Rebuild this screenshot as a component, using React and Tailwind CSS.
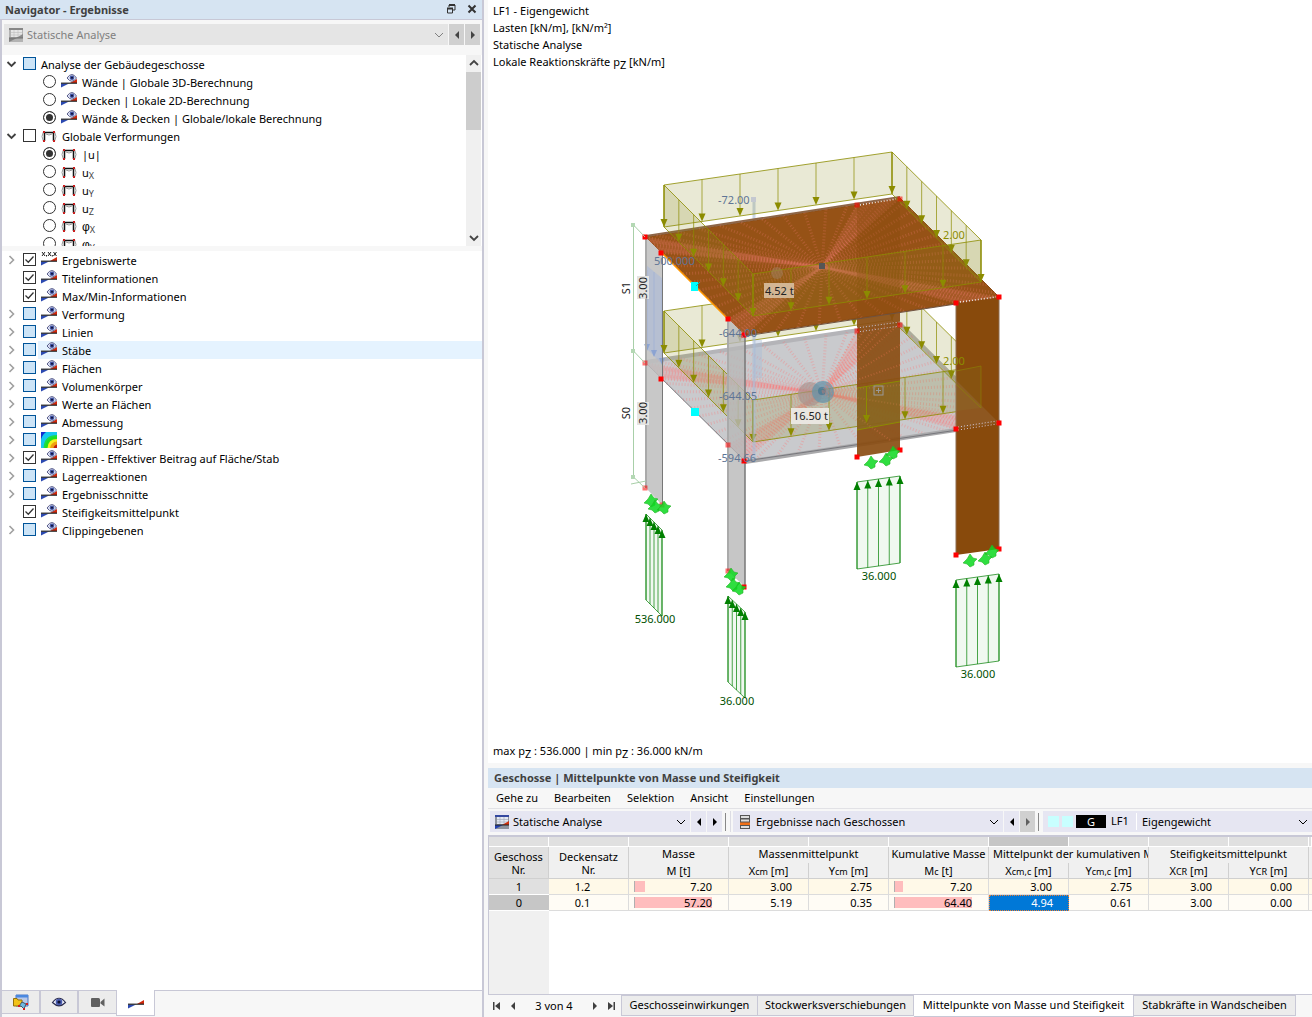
import { Fragment } from "react";

const topTree = [
  { label: "Analyse der Gebäudegeschosse", group: true, partial: true },
  { label: "Wände | Globale 3D-Berechnung", icon: "result", name: "storey" },
  { label: "Decken | Lokale 2D-Berechnung", icon: "result", name: "storey" },
  { label: "Wände & Decken | Globale/lokale Berechnung", icon: "result", name: "storey", checked: true },
  { label: "Globale Verformungen", group: true, icon: "frame" },
  { label: "|u|", icon: "frame", name: "deform", checked: true },
  { label: "u", sub: "X", icon: "frame", name: "deform" },
  { label: "u", sub: "Y", icon: "frame", name: "deform" },
  { label: "u", sub: "Z", icon: "frame", name: "deform" },
  { label: "φ", sub: "X", icon: "frame", name: "deform" },
  { label: "φ", sub: "Y", icon: "frame", name: "deform" },
];

const options = [
  { label: "Ergebniswerte", icon: "values", open: true, checked: true },
  { label: "Titelinformationen", checked: true },
  { label: "Max/Min-Informationen", checked: true },
  { label: "Verformung", open: true },
  { label: "Linien", open: true },
  { label: "Stäbe", open: true, active: true },
  { label: "Flächen", open: true },
  { label: "Volumenkörper", open: true },
  { label: "Werte an Flächen", open: true },
  { label: "Abmessung", open: true },
  { label: "Darstellungsart", icon: "contour", open: true },
  { label: "Rippen - Effektiver Beitrag auf Fläche/Stab", open: true, checked: true },
  { label: "Lagerreaktionen", open: true },
  { label: "Ergebnisschnitte", open: true },
  { label: "Steifigkeitsmittelpunkt", checked: true },
  { label: "Clippingebenen", open: true },
];

const rows = [
  { nr: "1", set: "1.2", mass: "7.20", massBar: 11, cum: "7.20", cumBar: 9, cells: ["3.00", "2.75", "3.00", "2.75", "3.00", "0.00"] },
  { nr: "0", set: "0.1", mass: "57.20", massBar: 78, cum: "64.40", cumBar: 78, cells: ["5.19", "0.35", "4.94", "0.61", "3.00", "0.00"] },
];

const menus = ["Gehe zu", "Bearbeiten", "Selektion", "Ansicht", "Einstellungen"];

function Eye() {
  return (
    <>
      <path d="M6 4Q11 -3 15.500 4Q11 10.500 6 4Z" fill="#dfe3f4" stroke="#4a4e80" strokeWidth=".9" />
      <circle cx="11" cy="3.800" r="2.300" fill="#4456a8" />
      <circle cx="11" cy="3.800" r="1" fill="#0d1030" />
    </>
  );
}

function ResultBars() {
  return (
    <>
      <path d="M0 13.500V9.500H8Z" fill="#2b49b0" />
      <path d="M16 5V9H9Z" fill="#d0280c" />
      <path d="M0 9.200H16" stroke="#222" strokeWidth="1.200" />
    </>
  );
}

function TreeIcon({ type }) {
  if (type === "frame") {
    return (
      <svg className="h-4 w-4 shrink-0" viewBox="0 0 16 16" fill="none">
        <path d="M2.500 3.500Q-0.500 8.500 2.500 13.500M13.500 3.500Q16.500 8.500 13.500 13.500" stroke="#999" />
        <path d="M3.500 13V4.500H12.500V13" stroke="#111" strokeWidth="1.500" />
        <path d="M5 6Q8 8 11 6" stroke="#999" />
        <path d="M2 3h2v2H2zM12 3h2v2h-2zM2 12h2v2H2zM12 12h2v2h-2z" fill="#c81e1e" />
      </svg>
    );
  }
  if (type === "contour") {
    return (
      <svg className="h-4 w-4 shrink-0" viewBox="0 0 16 16">
        <path d="M0 0H16V16H0Z" fill="#1030d0" />
        <path d="M16 0H5Q0 4 0 9V16H16Z" fill="#16c8f0" />
        <path d="M16 3Q3 3 2.500 16H16Z" fill="#18dc50" />
        <path d="M16 4.500Q5 4.500 4 16H16Z" fill="#20e020" />
        <path d="M16 7Q7 7 6.500 16H16Z" fill="#f4f020" />
        <path d="M16 9.500Q10 10 9 16H16Z" fill="#f0a010" />
        <path d="M16 12.500Q13 13 12.500 16H16Z" fill="#c02010" />
      </svg>
    );
  }
  if (type === "values") {
    return (
      <svg className="h-4 w-4 shrink-0" viewBox="0 0 16 16">
        <path d="M1 0l3 4M4 0l-3 4M7 0l3 4M10 0l-3 4M12.500 0l3 4M15.500 0l-3 4M5.500 3v1.500M11.300 3v1.500" stroke="#222" />
        <ResultBars />
      </svg>
    );
  }
  return (
    <svg className="h-4 w-4 shrink-0" viewBox="0 0 16 16">
      <ResultBars />
      <Eye />
    </svg>
  );
}

function Chevron({ className, d = "M2 4L6 8L10 4", width = 1 }) {
  return (
    <svg className={className} viewBox="0 0 12 12" fill="none" stroke="currentColor" strokeWidth={width}>
      <path d={d} />
    </svg>
  );
}

function CheckBox({ id, checked, partial }) {
  return (
    <span className="mt-px grid h-[13px] w-[13px] shrink-0">
      <input
        id={id}
        type="checkbox"
        defaultChecked={checked}
        className={
          partial
            ? "peer col-start-1 row-start-1 h-[13px] w-[13px] appearance-none border border-[#005499] bg-[#cce4f7]"
            : "peer col-start-1 row-start-1 h-[13px] w-[13px] appearance-none border border-[#333] bg-white"
        }
      />
      <svg className="pointer-events-none col-start-1 row-start-1 hidden h-[13px] w-[13px] peer-checked:block" viewBox="0 0 13 13" fill="none">
        <path d="M2.500 6.500L5.300 9.200L10.500 3.500" stroke="#333" strokeWidth="1.3" />
      </svg>
    </span>
  );
}

function TopRow({ item, index }) {
  const id = `top-${index}`;
  if (item.group) {
    return (
      <li className="flex h-[18px] items-start gap-[5px] pl-[3px]">
        <Chevron className="mt-0.5 h-3 w-[13px] shrink-0 text-[#404040]" width={1.8} />
        <CheckBox id={id} partial={item.partial} />
        {item.icon && <TreeIcon type={item.icon} />}
        <label htmlFor={id}>{item.label}</label>
      </li>
    );
  }
  return (
    <li className="flex h-[18px] items-start gap-[5px] pl-[41px]">
      <input
        id={id}
        type="radio"
        name={item.name}
        defaultChecked={item.checked}
        className="mt-px h-[13px] w-[13px] shrink-0 appearance-none rounded-full border border-[#333] bg-white checked:bg-[#333] checked:shadow-[inset_0_0_0_2px_white]"
      />
      <TreeIcon type={item.icon} />
      <label htmlFor={id} className={item.label === "φ" ? "font-['Liberation_Sans',sans-serif] text-[12px]" : ""}>
        {item.label}
        {item.sub && <sub className="font-['Noto_Sans',sans-serif] text-[9px] text-[#444]">{item.sub}</sub>}
      </label>
    </li>
  );
}

function OptionRow({ item, index }) {
  const id = `opt-${index}`;
  return (
    <li className="flex h-[18px] items-start gap-0.5 pl-[3px]">
      <span className="flex shrink-0 gap-[5px] pt-px">
        <span className="h-[13px] w-[13px]">
          {item.open && <Chevron className="mt-0.5 h-3 w-[13px] text-[#a0a0a0]" d="M4 2L8 6L4 10" width={1.6} />}
        </span>
        <CheckBox id={id} checked={item.checked} partial={!item.checked} />
      </span>
      <span className={item.active ? "flex h-[18px] flex-1 gap-[5px] bg-[#e5f3ff] pt-px pl-[3px]" : "flex h-[18px] flex-1 gap-[5px] pt-px pl-[3px]"}>
        <TreeIcon type={item.icon} />
        <label htmlFor={id} className="leading-[18px]">{item.label}</label>
      </span>
    </li>
  );
}

function AnalysisIcon({ muted }) {
  return (
    <svg className={muted ? "h-4 w-4 shrink-0 opacity-60 grayscale" : "h-4 w-4 shrink-0"} viewBox="0 0 16 16">
      <path d="M1 1H15V15H1Z" fill="#8d929c" />
      <path d="M1 1H15V3H1Z" fill="#3448a0" />
      <path d="M3 3H14V10H3Z" fill="#e4e8f2" />
      <path d="M3 5.500H14M3 8H14M6 3V10M10 3V10" stroke="#a6adbd" strokeWidth=".7" />
      <path d="M1 15V11H9Z" fill="#2440b0" />
      <path d="M15 7V11H8Z" fill="#d0300c" />
      <path d="M1 11H15" stroke="#222" />
    </svg>
  );
}

function ArrowButton({ dir, label, className = "" }) {
  return (
    <button type="button" aria-label={label} className={`flex h-[21px] w-[15px] shrink-0 items-center justify-center ${className}`}>
      <svg className="h-2 w-2" viewBox="0 0 8 8" fill="currentColor">
        <path d={dir === "left" ? "M6 0V8L2 4Z" : "M2 0V8L6 4Z"} />
      </svg>
    </button>
  );
}

function Combo({ icon, value, label, className }) {
  return (
    <div className={`flex h-[21px] items-center gap-[3px] ${className}`}>
      {icon}
      <select aria-label={label} className="h-[21px] min-w-0 flex-1 appearance-none bg-transparent leading-[21px]">
        <option>{value}</option>
      </select>
      <Chevron className="pointer-events-none mr-[3px] h-3 w-3 shrink-0" />
    </div>
  );
}

function Navigator() {
  return (
    <aside className="flex w-[484px] shrink-0 flex-col border-r-2 border-[#c8c8d6] bg-[#f7f7f7]">
      <header className="flex h-[19px] shrink-0 items-center justify-between bg-[#d6e4f2] pl-[5px] pr-1">
        <h1 className="leading-[18px] font-bold text-[#404040]">Navigator - Ergebnisse</h1>
        <div className="flex gap-[9px] pb-px">
          <button type="button" aria-label="Abdocken">
            <svg className="h-3 w-3" viewBox="0 0 12 12" fill="none" stroke="#333">
              <path d="M4 4V2H10V7H8" />
              <path d="M4 2H10M2 5.500H8" strokeWidth="2" />
              <path d="M2.500 5.500H7.500V10H2.500Z" />
            </svg>
          </button>
          <button type="button" aria-label="Schließen">
            <svg className="h-3 w-3" viewBox="0 0 12 12" stroke="#333" strokeWidth="2">
              <path d="M2.500 2.500L9.500 9.500M9.500 2.500L2.500 9.500" />
            </svg>
          </button>
        </div>
      </header>
      <div className="flex min-h-0 flex-1 flex-col border-l-2 border-t border-[#c8c8d6]">
        <div className="mt-1 flex gap-px pl-0.5 text-[#808080]">
          <Combo label="Analyse" value="Statische Analyse" icon={<AnalysisIcon muted />} className="flex-1 bg-[#e5e5e5] pl-1" />
          <ArrowButton dir="left" label="Vorherige Analyse" className="bg-[#d0d0d0] text-[#444]" />
          <ArrowButton dir="right" label="Nächste Analyse" className="mr-0.5 bg-[#d0d0d0] text-[#444]" />
        </div>
        <div className="mt-2.5 flex h-[191px] shrink-0 bg-white">
          <ul className="flex-1 overflow-hidden pt-px leading-[18px]">
            {topTree.map((item, i) => (
              <TopRow key={i} item={item} index={i} />
            ))}
          </ul>
          <div className="mr-px flex w-[15px] flex-col items-center bg-[#f0f0f0]">
            <Chevron className="my-0.5 h-3 w-3 text-[#444]" d="M2 8L6 4L10 8" width={1.8} />
            <div className="mt-px h-[58px] w-full bg-[#cdcdcd]" />
            <Chevron className="mt-auto mb-0.5 h-3 w-3 text-[#444]" width={1.8} />
          </div>
        </div>
        <ul className="mt-[5px] min-h-0 flex-1 overflow-hidden bg-white">
          {options.map((item, i) => (
            <OptionRow key={i} item={item} index={i} />
          ))}
        </ul>
        <div className="flex h-[27px] shrink-0">
          <button type="button" aria-label="Daten" className="flex h-6 w-[39px] items-center justify-center border-y border-r-2 border-[#c8c8d6] bg-[#ececec]">
            <svg className="h-4 w-4" viewBox="0 0 16 16">
              <path d="M3 1H15V12H3Z" fill="#b8c8e8" stroke="#4a78c8" />
              <path d="M3 1H15V3.500H3Z" fill="#4a88e0" />
              <path d="M0.500 4.500H4L5 6H9V12H0.500Z" fill="#f2c218" stroke="#94700c" />
              <path d="M6 12L9 8L13 10L11 15L8 12Z" fill="#70b8e0" stroke="#456" />
              <path d="M5 11h2v2H5zM10 14h2v2h-2zM13 9h2v2h-2z" fill="#d02020" />
            </svg>
          </button>
          <button type="button" aria-label="Anzeige" className="flex h-6 w-[38px] items-center justify-center border-y border-r-2 border-[#c8c8d6] bg-[#ececec]">
            <svg className="h-4 w-4" viewBox="0 0 16 16">
              <path d="M1.500 8.500Q8 0 14.500 8.500Q8 15 1.500 8.500Z" fill="#eef0fa" stroke="#2c2e50" strokeWidth="1.2" />
              <circle cx="8" cy="8" r="3.300" fill="#4a5cb0" />
              <circle cx="8" cy="8" r="1.600" fill="#0c1030" />
            </svg>
          </button>
          <button type="button" aria-label="Ansichten" className="flex h-6 w-[37px] items-center justify-center border-y border-[#c8c8d6] bg-[#ececec]">
            <svg className="h-4 w-4" viewBox="0 0 16 16" fill="#606060">
              <path d="M1 5Q1 4 2 4H8.500Q10 4 10 5.500V12Q10 13 9 13H2Q1 13 1 12ZM10.500 8L14.500 4.500V12.500L10.500 9.500Z" />
            </svg>
          </button>
          <button type="button" aria-label="Ergebnisse" className="flex h-[26px] w-[39px] items-center justify-center border-x border-b border-[#c8c8d6] bg-white">
            <svg className="h-4 w-4" viewBox="0 0 16 16">
              <ResultBars />
            </svg>
          </button>
          <div className="flex-1 border-t border-[#c8c8d6]" />
        </div>
      </div>
    </aside>
  );
}

const lerp = (a, b, t) => [a[0] + (b[0] - a[0]) * t, a[1] + (b[1] - a[1]) * t];
const pts = (list) => list.map((p) => p.join(",")).join(" ");

// Distribution of the slab mass towards its centre
function Rays({ dy, color, opacity }) {
  const centre = [822, 267 + dy];
  const corners = [[646, 237 + dy], [900, 198 + dy], [999, 297 + dy], [745, 335 + dy]];
  const walls = [
    [[646, 237 + dy], [662, 253 + dy]],
    [[728, 319 + dy], [745, 335 + dy]],
    [[857, 205 + dy], [900, 198 + dy]],
    [[956, 303 + dy], [999, 297 + dy]],
  ];
  return (
    <g stroke={color} fill="none" opacity={opacity}>
      {corners.map((c, i) =>
        Array.from({ length: 12 }, (_, k) => {
          const [x, y] = lerp(c, corners[(i + 1) % 4], (k + 0.5) / 12);
          return <line key={`${i}-${k}`} x1={x} y1={y} x2={centre[0]} y2={centre[1]} strokeWidth="3" strokeDasharray="1 2" opacity=".38" />;
        })
      )}
      {walls.map(([a, b], i) => (
        <Fragment key={i}>
          <polygon points={pts([a, b, centre])} fill={color} stroke="none" opacity=".22" />
          {Array.from({ length: 7 }, (_, k) => {
            const [x, y] = lerp(a, b, k / 6);
            return <line key={k} x1={x} y1={y} x2={centre[0]} y2={centre[1]} strokeWidth="2" strokeDasharray="1 2" opacity=".45" />;
          })}
        </Fragment>
      ))}
    </g>
  );
}

function LoadBox({ dy }) {
  const top = [[664, 185 + dy], [892, 152 + dy], [981, 240 + dy], [753, 274 + dy]];
  const down = ([x, y]) => [x, y + 42];
  return (
    <g>
      {top.map((a, i) => {
        const b = top[(i + 1) % 4];
        return (
          <g key={i}>
            <polygon points={pts([a, b, down(b), down(a)])} fill="#8c8c1e" fillOpacity=".19" stroke="#8c8c00" strokeOpacity=".8" />
            {Array.from({ length: 6 }, (_, k) => {
              const [x, y] = lerp(a, b, k / 6);
              return (
                <g key={k}>
                  <path d={`M${x} ${y}V${y + 36}`} stroke="#8c8c00" strokeOpacity=".7" />
                  <path d={`M${x - 3.5} ${y + 34}h7l-3.5 8z`} fill="#8c8c00" />
                </g>
              );
            })}
          </g>
        );
      })}
    </g>
  );
}

function Reaction({ a, b, height, label, tx, ty }) {
  return (
    <g>
      <polygon points={pts([a, b, [b[0], b[1] + height], [a[0], a[1] + height]])} fill="#008000" fillOpacity=".06" stroke="#1f8c1f" strokeOpacity=".8" />
      {[0, 0.25, 0.5, 0.75, 1].map((t) => {
        const [x, y] = lerp(a, b, t);
        return (
          <g key={t}>
            <path d={`M${x} ${y}V${y + height}`} stroke="#008000" strokeOpacity=".7" />
            <path d={`M${x - 3.5} ${y + 8}h7l-3.5 -8z`} fill="#008000" />
          </g>
        );
      })}
      <text x={tx} y={ty} textAnchor="middle" fill="#005000">{label}</text>
    </g>
  );
}

function Support({ x, y }) {
  return <path d={`M${x} ${y - 6}l3 4 4 1-3 3 0 3-4 2-3-3-4-1 4-4z`} fill="#0ad81e" fillOpacity=".85" stroke="#28b428" strokeWidth=".6" />;
}

function Nodes({ list, opacity = 1 }) {
  return list.map(([x, y]) => <rect key={`${x}-${y}`} x={x - 2.5} y={y - 2.5} width="5" height="5" fill="#ff0000" opacity={opacity} />);
}

function Model() {
  return (
    <svg className="absolute inset-0 h-full w-full text-[11px]" viewBox="488 0 824 763" preserveAspectRatio="xMinYMin meet" fill="none" aria-label="Gebäudemodell">
      {/* storey 0 */}
      <polygon points="646,363 900,324 999,423 745,461" fill="#c9cacd" />
      <path d="M646 362L900 324L999 422" stroke="#b4b4b8" strokeWidth="4" />
      <Rays dy={126} color="#ff7070" opacity=".85" />
      <path d="M745 462L956 430" stroke="#a9a9ab" strokeWidth="4" />
      <path d="M646 363L745 461L999 424" stroke="#77777c" />
      <polygon points="646,237 662,253 662,505 646,488" fill="#bebebe" fillOpacity=".85" />
      <polygon points="646,265 663,279 663,365 646,348" fill="#a4b6dc" fillOpacity=".5" />
      <path d="M647 270V350M654 272V356M662 280V362" stroke="#8ba8da" strokeOpacity=".4" />
      <path d="M644 344h6l-3 7zM651 350h6l-3 7zM659 358h6l-3 7z" fill="#7c9ad2" opacity=".7" />
      <path d="M646 237V488" stroke="#aaa" strokeWidth="2" />
      <path d="M662.500 253V505" stroke="#777" />
      <LoadBox dy={126} />
      <circle cx="810" cy="394" r="12" fill="#a8928e" fillOpacity=".65" />
      <circle cx="823" cy="392" r="11" fill="#6594aa" fillOpacity=".75" />
      <circle cx="822" cy="391" r="4" fill="#3b7190" opacity=".6" />
      <path d="M754 202V460" stroke="#a8bcd8" strokeWidth="3" opacity=".6" />
      <path d="M758 340V378" stroke="#a8bcd8" strokeWidth="8" opacity=".4" />
      {/* back wall */}
      <polygon points="857,205 900,198 900,450 857,457" fill="#8a4d12" fillOpacity=".92" />
      <g opacity=".3" stroke="#ff8264" strokeDasharray="1 2">
        <path d="M857 331L822 392M865 329L822 392M875 328L822 392M885 326L822 392M898 325L822 392M900 345L822 392M900 365L822 392M900 385L822 392M900 405L822 392M890 440L822 392" strokeWidth="2" />
      </g>
      <polygon points="857,388 900,381 900,422 857,430" fill="#84842a" fillOpacity=".35" />
      <path d="M857 388L900 381M857 430L900 422" stroke="#8c8c00" />
      <path d="M866.500 387V418" stroke="#8c8c00" />
      <path d="M863 415h7l-3.500 8z" fill="#8c8c00" />
      <path d="M857 328L900 322M857 332L900 326" stroke="#c8c4d4" strokeDasharray="1 2" />
      <rect x="874" y="386" width="9" height="9" stroke="#999" />
      <path d="M878.500 388V393M876 390.500H881" stroke="#999" />
      {/* right wall */}
      <polygon points="956,303 999,297 999,549 956,555" fill="#884a0c" />
      <path d="M956 303V555M999 297V549" stroke="#8d6c50" />
      <polygon points="956,370 981,366 981,408 956,411" fill="#84842a" fillOpacity=".15" />
      <polygon points="956,380 999,423 956,429" fill="#9b7650" fillOpacity=".3" />
      <path d="M956 371L981 366V408M956 384L981 408" stroke="#8c8c00" opacity=".5" />
      <path d="M958 427L997 421M958 430L997 424" stroke="#d4cce0" strokeDasharray="1 2" />
      {/* storey 1 */}
      <polygon points="646,237 900,198 999,297 745,335" fill="#965216" stroke="#8a4a12" />
      <path d="M646 236L900 197" stroke="#8d6547" strokeWidth="2" />
      <Rays dy={0} color="#ff8282" opacity=".65" />
      <polygon points="857,205 900,198 900,311 857,318" fill="#8a4a0c" fillOpacity=".35" />
      <path d="M662 253L728 319" stroke="#ff9600" strokeWidth="1.500" />
      <path d="M745 336L956 304" stroke="#6f5240" />
      <path d="M860 205L896 199M960 302L996 297" stroke="#eee" strokeDasharray="1 2" strokeWidth="1.500" />
      {/* front wall */}
      <polygon points="728,319 745,335 745,587 728,571" fill="#b8b8b8" fillOpacity=".8" />
      <path d="M728 319V571" stroke="#aaa" strokeWidth="2" />
      <path d="M745 335V587" stroke="#777" strokeWidth="1.500" />
      <LoadBox dy={0} />
      <rect x="819" y="263" width="6" height="6" fill="#555" />
      <circle cx="777" cy="273" r="6" fill="#a08060" opacity=".5" />
      <rect x="751" y="197" width="5" height="5" fill="#c4c8d0" />
      <rect x="691" y="282" width="7" height="9" fill="#0ff" />
      <path d="M696 286L700 282" stroke="#0bb" />
      <rect x="691" y="408" width="8" height="8" fill="#0ff" />

      <Nodes list={[[645, 237], [661, 253], [744, 335], [999, 297], [956, 303], [661, 379], [744, 461], [956, 429], [999, 423], [857, 457], [900, 450], [956, 555], [999, 549], [744, 587], [728, 319]]} />
      <Nodes opacity={0.55} list={[[645, 363], [728, 445], [645, 488], [857, 205], [900, 199], [857, 331], [900, 325], [728, 571], [662, 505]]} />
      <Support x={651} y={500} />
      <Support x={655} y={506} />
      <Support x={664} y={507} />
      <Support x={731} y={574} />
      <Support x={733} y={584} />
      <Support x={739} y={588} />
      <Support x={871} y={462} />
      <Support x={886} y={459} />
      <Support x={893} y={452} />
      <Support x={970} y={560} />
      <Support x={985} y={558} />
      <Support x={992} y={551} />

      {/* storey heights */}
      <path d="M645 237L633.500 225V477L645 488M645 363L633.500 351M631 484L646 481" stroke="#a8cfa8" />
      <path d="M631 223h4v4h-4zM631 349h4v4h-4zM631 475h4v4h-4z" fill="#b4d8b4" />
      <rect x="637" y="276" width="12" height="23" fill="#e4e4e2" />
      <rect x="637" y="402" width="12" height="23" fill="#e4e4e2" />
      <g fill="#222" textAnchor="middle">
        <text transform="translate(630 288) rotate(-90)">S1</text>
        <text transform="translate(647 288) rotate(-90)">3.00</text>
        <text transform="translate(630 413) rotate(-90)">S0</text>
        <text transform="translate(647 413) rotate(-90)">3.00</text>
      </g>

      <Reaction a={[646, 514]} b={[662, 530]} height={86} label="536.000" tx={655} ty={623} />
      <Reaction a={[728, 596]} b={[745, 612]} height={86} label="36.000" tx={737} ty={705} />
      <Reaction a={[857, 482]} b={[900, 476]} height={87} label="36.000" tx={879} ty={580} />
      <Reaction a={[956, 580]} b={[999, 574]} height={87} label="36.000" tx={978} ty={678} />

      <g fill="#5f7595">
        <text x="718" y="204">-72.00</text>
        <text x="654" y="265">500.000</text>
        <text x="719" y="337">-644.00</text>
        <text x="719" y="400">-644.05</text>
        <text x="718" y="462">-594.66</text>
      </g>
      <g fill="#8c8c00">
        <text x="943" y="239">2.00</text>
        <text x="943" y="365">2.00</text>
      </g>
      <rect x="764" y="283" width="30" height="15" fill="#d3b694" />
      <text x="765" y="295" fill="#222">4.52 t</text>
      <rect x="791" y="408" width="38" height="16" fill="#e9e6e0" />
      <text x="793" y="420" fill="#222">16.50 t</text>
    </svg>
  );
}

function Viewport() {
  return (
    <section className="relative flex min-h-0 flex-1 flex-col justify-between bg-white px-[5px] pt-0.5 pb-1">
      <Model />
      <div className="leading-[17px]">
        <p>LF1 - Eigengewicht</p>
        <p>Lasten [kN/m], [kN/m²]</p>
        <p>Statische Analyse</p>
        <p className="h-[17px]">
          Lokale Reaktionskräfte p<sub className="text-[11px]">Z</sub> [kN/m]
        </p>
      </div>
      <p className="leading-[17px]">
        max p<sub className="text-[11px]">Z</sub> : 536.000 | min p<sub className="text-[11px]">Z</sub> : 36.000 kN/m
      </p>
    </section>
  );
}

function BarCell({ value, width }) {
  return (
    <td className="border-r border-b border-[#dcdcdc] p-0">
      <div className="grid h-[15px] items-center pl-[5px]">
        <span className="col-start-1 row-start-1 h-[11px] border-l border-[#b0b0b0] bg-[#ffbdbd]" style={{ width }} />
        <span className="col-start-1 row-start-1 pr-4 text-right">{value}</span>
      </div>
    </td>
  );
}

function Unit({ name, sub, unit }) {
  return (
    <th scope="col" className="h-4 border-r border-b border-[#d0d0d0] align-top leading-[15px] font-normal">
      {name}
      {sub && <sub className="bottom-0 text-[9px]">{sub}</sub>} [{unit}]
    </th>
  );
}

function StoreyTable() {
  return (
    <table className="w-full table-fixed border-separate border-spacing-0 text-center leading-[15px] [&_td]:p-0 [&_th]:p-0">
      <colgroup>
        <col className="w-[60px]" />
        <col className="w-[80px]" />
        <col className="w-[100px]" />
        <col className="w-[80px]" />
        <col className="w-[80px]" />
        <col className="w-[100px]" />
        <col className="w-[80px]" />
        <col className="w-[80px]" />
        <col className="w-[80px]" />
        <col className="w-[80px]" />
        <col />
      </colgroup>
      <thead className="bg-[#f0f0f0]">
        <tr>
          {Array.from({ length: 11 }, (_, i) => (
            <td key={i} className={i === 6 ? "h-2.5 border-r border-b border-white bg-[#c6c6c6]" : "h-2.5 border-r border-b border-white bg-[#e0e0e0]"} />
          ))}
        </tr>
        <tr className="leading-[14px]">
          <th scope="col" rowSpan="2" className="border-r border-b border-[#d0d0d0] bg-[#e0e0e0] leading-[13px] font-normal">Geschoss<br />Nr.</th>
          <th scope="col" rowSpan="2" className="border-r border-b border-[#d0d0d0] leading-[13px] font-normal">Deckensatz<br />Nr.</th>
          <th scope="col" className="h-4 border-r border-[#d0d0d0] align-top font-normal">Masse</th>
          <th scope="colgroup" colSpan="2" className="border-r border-[#d0d0d0] align-top font-normal">Massenmittelpunkt</th>
          <th scope="col" className="border-r border-[#d0d0d0] align-top font-normal whitespace-nowrap">Kumulative Masse</th>
          <th scope="colgroup" colSpan="2" className="overflow-hidden border-r border-[#d0d0d0] text-left align-top font-normal whitespace-nowrap"><span className="pl-1">Mittelpunkt der kumulativen Masse</span></th>
          <th scope="colgroup" colSpan="2" className="border-r border-[#d0d0d0] align-top font-normal">Steifigkeitsmittelpunkt</th>
          <td rowSpan="2" className="border-b border-[#d0d0d0]" />
        </tr>
        <tr>
          <Unit name="M" unit="t" />
          <Unit name="X" sub="cm" unit="m" />
          <Unit name="Y" sub="cm" unit="m" />
          <Unit name="M" sub="c" unit="t" />
          <Unit name="X" sub="cm,c" unit="m" />
          <Unit name="Y" sub="cm,c" unit="m" />
          <Unit name="X" sub="CR" unit="m" />
          <Unit name="Y" sub="CR" unit="m" />
        </tr>
      </thead>
      <tbody>
        {rows.map((row, i) => {
          const cell = (k) => (
            <td
              key={k}
              className={
                i === 1 && k === 2
                  ? "border border-dotted border-[#f08030] bg-[#0078d7] text-right text-white"
                  : "border-r border-b border-[#dcdcdc] text-right"
              }
            >
              <span className={i === 1 && k === 2 ? "block h-3.5 pr-[15px] leading-[14px]" : "block h-[15px] pr-4"}>{row.cells[k]}</span>
            </td>
          );
          return (
            <tr key={row.nr} className={i === 0 ? "h-4 bg-[#fff9e8]" : "h-4 bg-[#fffcf5]"}>
              <th scope="row" className={i === 0 ? "border-b border-white bg-[#e0e0e0] font-normal" : "border-b border-white bg-[#c6c6c6] font-normal"}>{row.nr}</th>
              <td className="border-r border-b border-[#dcdcdc]"><span className="pr-3">{row.set}</span></td>
              <BarCell value={row.mass} width={row.massBar} />
              {[0, 1].map(cell)}
              <BarCell value={row.cum} width={row.cumBar} />
              {[2, 3, 4, 5].map(cell)}
              <td className="border-b border-[#dcdcdc]" />
            </tr>
          );
        })}
      </tbody>
    </table>
  );
}

function PageButton({ label, d }) {
  return (
    <button type="button" aria-label={label} className="text-[#404040]">
      <svg className="h-2 w-[9px]" viewBox="0 0 9 8" fill="currentColor">
        <path d={d} />
      </svg>
    </button>
  );
}

function ResultsPanel() {
  return (
    <section className="mt-[5px] flex h-[249px] shrink-0 flex-col bg-[#f7f7f7]">
      <h2 className="h-5 shrink-0 bg-[#d6e4f2] pl-1.5 leading-5 font-bold text-[#404040]">Geschosse | Mittelpunkte von Masse und Steifigkeit</h2>
      <nav className="flex h-[21px] shrink-0 items-center gap-4 border-b border-[#e2e2e6] pt-px pl-2">
        {menus.map((m) => (
          <button key={m} type="button">{m}</button>
        ))}
      </nav>
      <div className="flex shrink-0 items-center gap-px pt-0.5 pb-[3px] pl-0.5">
        <Combo label="Analyse" value="Statische Analyse" icon={<AnalysisIcon />} className="w-[200px] bg-[#e6e6f2] pl-1" />
        <ArrowButton dir="left" label="Zurück" className="bg-[#e6e6f2]" />
        <ArrowButton dir="right" label="Weiter" className="bg-[#e6e6f2]" />
        <span className="mx-0.5 h-[18px] w-px bg-[#888]" />
        <span className="mx-px h-[21px] w-px bg-[#dcdce4]" />
        <Combo
          label="Tabelle"
          value="Ergebnisse nach Geschossen"
          className="w-[270px] bg-[#e6e6f2] pl-1"
          icon={
            <svg className="h-4 w-4 shrink-0" viewBox="0 0 16 16">
              <path d="M3 1H13V15H3Z" fill="#555" />
              <path d="M4 2H12V4H4ZM4 5.500H12V7.500H4ZM4 12H12V14H4Z" fill="#ddd" />
              <path d="M3 8.500H13V11H3Z" fill="#f07018" />
            </svg>
          }
        />
        <ArrowButton dir="left" label="Vorherige Tabelle" className="bg-[#e6e6f2]" />
        <ArrowButton dir="right" label="Nächste Tabelle" className="bg-[#d0d0d0] text-[#606060]" />
        <span className="ml-0.5 h-[18px] w-px bg-[#888]" />
        <Combo
          label="Lastfall"
          value="Eigengewicht"
          className="ml-[3px] min-w-0 flex-1 bg-[#e6e6f2] pl-[5px]"
          icon={
            <span className="flex items-center">
              <span className="h-[11px] w-[11px] bg-[#c8ffff]" />
              <span className="ml-[3px] h-[11px] w-[11px] bg-[#c8ffff]" />
              <span className="ml-[3px] h-[13px] w-[30px] bg-black text-center leading-[13px] text-white">G</span>
              <span className="mr-0.5 ml-[5px] w-[26px] border-r border-white">LF1</span>
            </span>
          }
        />
      </div>
      <div className="flex min-h-0 flex-1 flex-col border-t-2 border-l border-[#c8c8d6] bg-white">
        <StoreyTable />
        <div className="w-[60px] flex-1 bg-[#f0f0f0]" />
      </div>
      <footer className="flex h-[23px] shrink-0 border-t border-[#c8c8d6] pl-1">
        <div className="flex w-[129px] shrink-0 items-center gap-2">
          <PageButton label="Erste" d="M1 0H2.500V8H1ZM8 0V8L3 4Z" />
          <PageButton label="Vorherige" d="M6 0V8L2 4Z" />
          <span className="mx-1.5 w-11 text-center whitespace-nowrap">3 von 4</span>
          <PageButton label="Nächste" d="M3 0V8L7 4Z" />
          <PageButton label="Letzte" d="M6.500 0H8V8H6.500ZM1 0V8L6 4Z" />
        </div>
        <button type="button" className="h-[21px] w-[137px] border border-[#c8c8d6] bg-[#ececec] whitespace-nowrap">Geschosseinwirkungen</button>
        <button type="button" className="h-[21px] w-[156px] border border-l-0 border-[#c8c8d6] bg-[#ececec] whitespace-nowrap">Stockwerksverschiebungen</button>
        <button type="button" className="h-[22px] w-[220px] border-r border-b border-[#c8c8d6] bg-white whitespace-nowrap">Mittelpunkte von Masse und Steifigkeit</button>
        <button type="button" className="h-[21px] w-[162px] border border-l-0 border-[#c8c8d6] bg-[#ececec] whitespace-nowrap">Stabkräfte in Wandscheiben</button>
      </footer>
    </section>
  );
}

export default function App() {
  return (
    <div className="flex h-screen overflow-hidden bg-[#f7f7f7] font-['Noto_Sans','Open_Sans',sans-serif] text-[11px] text-black">
      <Navigator />
      <main className="ml-1 flex min-w-0 flex-1 flex-col">
        <Viewport />
        <ResultsPanel />
      </main>
    </div>
  );
}
